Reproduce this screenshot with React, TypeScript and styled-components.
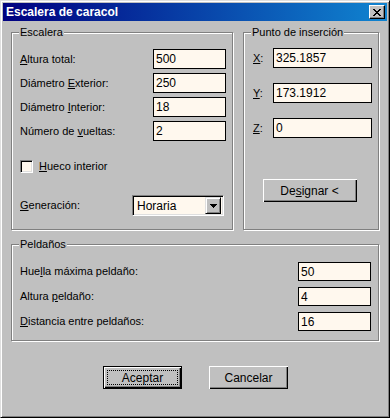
import styled, { createGlobalStyle } from 'styled-components';

const GlobalStyle = createGlobalStyle`
  html, body {
    margin: 0;
    padding: 0;
    background: #c0c0c0;
  }
  body {
    font-family: "Liberation Sans", Arial, sans-serif;
    font-size: 11px;
    color: #000;
  }
`;

const Window = styled.div`
  width: 390px;
  height: 418px;
  box-sizing: border-box;
  background: #c0c0c0;
  border: 1px solid;
  border-color: #dfdfdf #000 #000 #dfdfdf;
  box-shadow: inset 1px 1px 0 #fff, inset -1px -1px 0 #808080;
  padding: 2px;
  display: flex;
  flex-direction: column;
`;

const TitleBar = styled.div`
  height: 18px;
  display: flex;
  align-items: center;
  justify-content: space-between;
  padding: 0 2px 0 3px;
  background: linear-gradient(to right, #000080, #1084d0);
  color: #fff;
  font-weight: bold;
  font-size: 12px;
`;

const CloseButton = styled.div`
  width: 16px;
  height: 14px;
  box-sizing: border-box;
  background: #c0c0c0;
  border: 1px solid;
  border-color: #fff #000 #000 #fff;
  box-shadow: inset -1px -1px 0 #808080;
  display: flex;
  align-items: center;
  justify-content: center;
`;

const Body = styled.div`
  padding: 11px 8px 0 8px;
  display: flex;
  flex-direction: column;
`;

const TopRow = styled.div`
  display: flex;
  gap: 10px;
`;

const Group = styled.div<{ $w: number; $h: number }>`
  position: relative;
  width: ${(p) => p.$w}px;
  height: ${(p) => p.$h}px;
  box-sizing: border-box;
  border: 1px solid #808080;
  box-shadow: 1px 1px 0 #fff, inset 1px 1px 0 #fff;
  display: flex;
  flex-direction: column;
`;

const Legend = styled.span`
  position: absolute;
  top: -7px;
  left: 7px;
  padding: 0 1px;
  background: #c0c0c0;
  line-height: 13px;
`;

const FieldRow = styled.div<{ $h?: number }>`
  display: flex;
  align-items: center;
  justify-content: space-between;
  height: ${(p) => p.$h ?? 20}px;
`;

const Label = styled.span`
  line-height: 13px;
  white-space: nowrap;
`;

const Key = styled.span`
  text-decoration: underline;
  text-underline-offset: 1px;
`;

const TextBox = styled.div<{ $w: number; $h?: number }>`
  width: ${(p) => p.$w}px;
  height: ${(p) => p.$h ?? 20}px;
  box-sizing: border-box;
  border: 1px solid #000;
  background: #fff8ee;
  padding: 0 2px;
  display: flex;
  align-items: center;
  font-size: 12px;
`;

const EscaleraBody = styled.div`
  padding: 16px 6px 0 8px;
  display: flex;
  flex-direction: column;
  gap: 4px;
`;

const CheckRow = styled.div`
  display: flex;
  align-items: center;
  gap: 6px;
  margin-top: 15px;
  height: 13px;
`;

const CheckBox = styled.div`
  width: 13px;
  height: 13px;
  box-sizing: border-box;
  border: 1px solid;
  border-color: #808080 #fff #fff #808080;
  box-shadow: inset 1px 1px 0 #000, inset -1px -1px 0 #dfdfdf;
  background: #fff8ee;
`;

const GenRow = styled(FieldRow)`
  margin-top: 18px;
  padding-right: 2px;
`;

const Select = styled.div`
  width: 92px;
  height: 21px;
  box-sizing: border-box;
  border: 1px solid;
  border-color: #808080 #fff #fff #808080;
  box-shadow: inset 1px 1px 0 #000, inset -1px -1px 0 #dfdfdf;
  background: #fff8ee;
  display: flex;
  align-items: center;
  justify-content: space-between;
  padding: 2px 2px 2px 4px;
  font-size: 12px;
`;

const ArrowButton = styled.div`
  width: 16px;
  height: 17px;
  box-sizing: border-box;
  background: #c0c0c0;
  border: 1px solid;
  border-color: #dfdfdf #000 #000 #dfdfdf;
  box-shadow: inset 1px 1px 0 #fff, inset -1px -1px 0 #808080;
  display: flex;
  align-items: center;
  justify-content: center;
`;

const PuntoBody = styled.div`
  padding: 15px 6px 0 9px;
  display: flex;
  flex-direction: column;
  gap: 15px;
`;

const Button = styled.div<{ $w: number; $default?: boolean }>`
  width: ${(p) => p.$w}px;
  height: 23px;
  box-sizing: border-box;
  background: #c0c0c0;
  border: ${(p) => (p.$default ? '1px solid #000' : 'none')};
  box-shadow: inset 1px 1px 0 #fff, inset -1px -1px 0 #000, inset -2px -2px 0 #808080;
  display: flex;
  align-items: center;
  justify-content: center;
  font-size: 12px;
`;

const FocusRect = styled.span`
  display: flex;
  align-items: center;
  justify-content: center;
  width: calc(100% - 8px);
  height: calc(100% - 8px);
  outline: 1px dotted #000;
`;

const DesignarWrap = styled.div`
  display: flex;
  justify-content: center;
  margin-top: 41px;
  padding-right: 3px;
`;

const PeldBody = styled.div`
  padding: 17px 7px 0 8px;
  display: flex;
  flex-direction: column;
  gap: 6px;
`;

const Footer = styled.div`
  display: flex;
  justify-content: center;
  gap: 27px;
  margin-top: 25px;
  padding-left: 1px;
`;

function App() {
  return (
    <>
      <GlobalStyle />
      <Window>
        <TitleBar>
          <span>Escalera de caracol</span>
          <CloseButton>
            <svg width="8" height="7" viewBox="0 0 8 7" shapeRendering="crispEdges">
              <path d="M0 0h2v1h-2zM6 0h2v1h-2zM1 1h2v1h-2zM5 1h2v1h-2zM2 2h4v1h-4zM3 3h2v1h-2zM2 4h4v1h-4zM1 5h2v1h-2zM5 5h2v1h-2zM0 6h2v1h-2zM6 6h2v1h-2z" fill="#000" />
            </svg>
          </CloseButton>
        </TitleBar>
        <Body>
          <TopRow>
            <Group $w={222} $h={198}>
              <Legend>Escalera</Legend>
              <EscaleraBody>
                <FieldRow>
                  <Label><Key>A</Key>ltura total:</Label>
                  <TextBox $w={73}>500</TextBox>
                </FieldRow>
                <FieldRow>
                  <Label>Diámetro <Key>E</Key>xterior:</Label>
                  <TextBox $w={73}>250</TextBox>
                </FieldRow>
                <FieldRow>
                  <Label>Diámetro <Key>I</Key>nterior:</Label>
                  <TextBox $w={73}>18</TextBox>
                </FieldRow>
                <FieldRow>
                  <Label>Número de <Key>v</Key>ueltas:</Label>
                  <TextBox $w={73}>2</TextBox>
                </FieldRow>
                <CheckRow>
                  <CheckBox />
                  <Label><Key>H</Key>ueco interior</Label>
                </CheckRow>
                <GenRow $h={21}>
                  <Label><Key>G</Key>eneración:</Label>
                  <Select>
                    <span>Horaria</span>
                    <ArrowButton>
                      <svg width="7" height="4" viewBox="0 0 7 4" shapeRendering="crispEdges">
                        <path d="M0 0h7v1h-7zM1 1h5v1h-5zM2 2h3v1h-3zM3 3h1v1h-1z" fill="#000" />
                      </svg>
                    </ArrowButton>
                  </Select>
                </GenRow>
              </EscaleraBody>
            </Group>
            <Group $w={136} $h={198}>
              <Legend>Punto de inserción</Legend>
              <PuntoBody>
                <FieldRow>
                  <Label><Key>X</Key>:</Label>
                  <TextBox $w={99}>325.1857</TextBox>
                </FieldRow>
                <FieldRow>
                  <Label><Key>Y</Key>:</Label>
                  <TextBox $w={99}>173.1912</TextBox>
                </FieldRow>
                <FieldRow>
                  <Label><Key>Z</Key>:</Label>
                  <TextBox $w={99}>0</TextBox>
                </FieldRow>
              </PuntoBody>
              <DesignarWrap>
                <Button $w={94}>De<Key>s</Key>ignar &lt;</Button>
              </DesignarWrap>
            </Group>
          </TopRow>
          <Group $w={368} $h={97} style={{ marginTop: 14 }}>
            <Legend>Peldaños</Legend>
            <PeldBody>
              <FieldRow $h={19}>
                <Label>Hue<Key>l</Key>la máxima peldaño:</Label>
                <TextBox $w={73} $h={19}>50</TextBox>
              </FieldRow>
              <FieldRow $h={19}>
                <Label>Altura <Key>p</Key>eldaño:</Label>
                <TextBox $w={73} $h={19}>4</TextBox>
              </FieldRow>
              <FieldRow $h={19}>
                <Label><Key>D</Key>istancia entre peldaños:</Label>
                <TextBox $w={73} $h={19}>16</TextBox>
              </FieldRow>
            </PeldBody>
          </Group>
          <Footer>
            <Button $w={79} $default>
              <FocusRect>Aceptar</FocusRect>
            </Button>
            <Button $w={79}>Cancelar</Button>
          </Footer>
        </Body>
      </Window>
    </>
  );
}

export default App;
